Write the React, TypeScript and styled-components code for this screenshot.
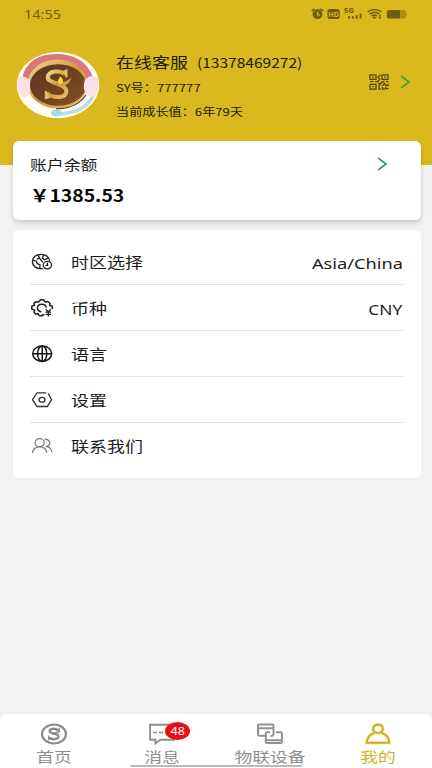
import React from "react";
import styled, { createGlobalStyle } from "styled-components";

const Global = createGlobalStyle`
  * { box-sizing: border-box; }
  body { margin: 0; background: #f2f2f2; font-family: "Noto Sans CJK SC", "Noto Sans", sans-serif; color: #1c1c1c; }
  svg { display: block; flex: none; }
`;

const Screen = styled.div`
  width: 432px;
  height: 768px;
  display: flex;
  flex-direction: column;
  overflow: hidden;
  background: #f2f2f2;
`;

const Text = styled.span<{ $size: number; $sx?: number; $from?: string; $weight?: number; $latin?: boolean }>`
  display: inline-block;
  white-space: nowrap;
  font-size: ${(p) => p.$size}px;
  font-weight: ${(p) => p.$weight ?? 400};
  font-family: ${(p) => (p.$latin ? '"Noto Sans", "Noto Sans CJK SC", sans-serif' : "inherit")};
  transform: scaleX(${(p) => p.$sx ?? 1.25});
  transform-origin: ${(p) => p.$from ?? "left"} center;
`;

const Header = styled.header`
  height: 165px;
  flex: none;
  background: #dbb91e;
`;

const StatusBar = styled.div`
  height: 28px;
  padding: 0 24px;
  display: flex;
  align-items: center;
  justify-content: space-between;
  color: #6f5b0c;
`;

const Profile = styled.div`
  height: 84px;
  margin-top: 15px;
  padding: 0 21px 0 16px;
  display: flex;
  align-items: center;
`;

const ProfileLines = styled.div`
  flex: 1;
  margin-left: 16px;
  padding-top: 1px;
  color: #211b05;
`;

const Line = styled.div<{ $h: number }>`
  height: ${(p) => p.$h}px;
  display: flex;
  align-items: center;
`;

const Phone = styled.div`
  margin-left: 23px;
`;

const ProfileActions = styled.div`
  display: flex;
  align-items: center;
  gap: 11px;
  margin-top: -6px;
`;

const Card = styled.section`
  width: 408px;
  flex: none;
  margin: 0 0 0 12.5px;
  background: #fff;
  border-radius: 6px;
`;

const Balance = styled(Card)`
  height: 79px;
  margin-top: -24px;
  padding: 9px 33px 0 17px;
  position: relative;
  box-shadow: 0 3px 5px rgba(0, 0, 0, 0.17);
`;

const BalanceTitle = styled.div`
  height: 28px;
  display: flex;
  align-items: center;
  justify-content: space-between;
`;

const Amount = styled.div`
  height: 34px;
  display: flex;
  align-items: center;
  color: #080808;
`;

const Menu = styled(Card)`
  height: 248px;
  margin-top: 10px;
  padding: 9px 18px 0 17px;
`;

const MenuRow = styled.div`
  height: 46px;
  display: flex;
  align-items: center;
  border-bottom: 1px solid #e3e3e3;
  &:last-child { border-bottom: 0; }
`;

const MenuLabel = styled.div`
  flex: 1;
  margin-left: 17px;
  padding-bottom: 2px;
`;

const MenuValue = styled.div`
  padding-top: 1px;
`;

const TabBar = styled.nav`
  height: 54px;
  flex: none;
  margin-top: auto;
  display: grid;
  grid-template-columns: repeat(4, 1fr);
  background: #fff;
  border-radius: 8px 8px 0 0;
  position: relative;
`;

const Tab = styled.div<{ $active?: boolean }>`
  display: flex;
  flex-direction: column;
  align-items: center;
  padding-top: 8px;
  color: ${(p) => (p.$active ? "#d0b32c" : "#8e8e8e")};
`;

const IconSlot = styled.div`
  height: 24px;
  display: flex;
  align-items: center;
  position: relative;
`;

const TabLabel = styled.div`
  height: 20px;
  display: flex;
  align-items: center;
`;

const Badge = styled.div`
  position: absolute;
  left: 17px;
  top: 0;
  width: 25px;
  height: 18px;
  border-radius: 50%;
  background: #e60f14;
  color: #fff;
  display: flex;
  align-items: center;
  justify-content: center;
`;

const HomeIndicator = styled.div`
  position: absolute;
  left: 130px;
  bottom: 1px;
  width: 172px;
  height: 2px;
  border-radius: 1px;
  background: #bababa;
`;

const StatusIcons = () => (
  <svg width="98" height="14" viewBox="0 0 98 14">
    <g fill="#6f5b0c">
      <circle cx="7.5" cy="7.2" r="4.9" />
      <path d="M1.6 4 4.6 1.8M13.4 4 10.4 1.8" stroke="#6f5b0c" strokeWidth="1.5" />
      <path d="M7.5 4.8v3H10" stroke="#dbb91e" strokeWidth="1.2" fill="none" />
      <rect x="17.4" y="2" width="12.4" height="10" rx="2.8" />
      <text x="23.6" y="9.7" fontSize="7.2" fontWeight="700" fill="#dbb91e" textAnchor="middle" fontFamily="Noto Sans">HD</text>
      <text x="34" y="6.4" fontSize="6.5" fontWeight="700" textLength="10" lengthAdjust="spacingAndGlyphs" fontFamily="Noto Sans">5G</text>
      <path d="M38 9.2h2v2.3h-2zM41.8 9.2h2v2.3h-2zM45.6 8.2h2v3.3h-2zM49.6 6.6h2v4.9h-2z" />
      <path d="M57.5 5Q64.5-.2 71.5 5M59.5 7.2Q64.5 3.4 69.5 7M61.7 9.2Q64.5 7 67 9" fill="none" stroke="#6f5b0c" strokeWidth="1.5" />
      <path d="m64.3 12-2-1.8q2-1.2 4 0zM70 7.2l1.4 2.2h-2.8zM70 12.2l-1.4-2.2h2.8z" />
      <path d="M79.5 3H90v8.6H79.5Q76.8 11.6 76.8 9V5.6Q76.8 3 79.5 3" />
      <path d="M90 3h4q2 0 2.3 2.4 1.6 1.8 0 3.6-.3 2.6-2.3 2.6h-4z" opacity=".45" />
    </g>
  </svg>
);

const Avatar = () => (
  <svg width="84" height="68" viewBox="0 0 84 68">
    <defs>
      <linearGradient id="gold" x1="0" y1="0" x2="1" y2="1">
        <stop offset="0" stopColor="#f3d896" />
        <stop offset=".5" stopColor="#d39a3b" />
        <stop offset="1" stopColor="#e8bd68" />
      </linearGradient>
      <linearGradient id="brown" x1="0" y1="0" x2="1" y2="1">
        <stop offset="0" stopColor="#5b321f" />
        <stop offset="1" stopColor="#845026" />
      </linearGradient>
      <clipPath id="face"><ellipse cx="42" cy="34" rx="41.5" ry="33.2" /></clipPath>
    </defs>
    <g clipPath="url(#face)">
      <ellipse cx="42" cy="34" rx="41.5" ry="33.2" fill="#fffdf4" />
      <path d="M6 27Q12 3 40 3q28 0 37 23l-8 8Q60 12 42 12T15 34z" fill="#d8787e" />
      <path d="M60 5.500q10 4 15.500 14" fill="none" stroke="#fff" strokeWidth="2.200" strokeDasharray="2 1.500" />
      <path d="M40 63q28 0 37-18" fill="none" stroke="#b9dce8" strokeWidth="3.500" />
    </g>
    <ellipse cx="41.500" cy="33" rx="30" ry="24.500" fill="url(#gold)" />
    <path d="M70 44Q60 58 40 57.800" fill="none" stroke="#443619" strokeWidth="1.200" />
    <ellipse cx="42" cy="34" rx="28" ry="20.800" fill="url(#brown)" />
    <path d="M2 27Q8 23 14 29V42Q10 48 5 45-1 36 2 27M82 27Q75 22 69 29q-3 8 1 14 5 4 9 2 5-9 3-18" fill="#fbe1e6" />
    <ellipse cx="40.500" cy="62" rx="5.500" ry="3.500" fill="#a8d9ec" />
    <path d="M48.500 23Q45 20 39.500 20.500C33 21 30.500 25 32.500 28.500 35 32 47 33 50 38.500 51.500 43 48 46 42 46Q34.500 46 31 42" fill="none" stroke="url(#gold)" strokeWidth="4" />
    <path d="M51.500 18v8.500h-1.800L46.500 20zM28.800 48.500V40h2l3.500 7z" fill="#e6b963" />
    <path d="M42 31.500q7 1 13.500-5-1.500 6.500-8.500 8.500z" fill="#d6a04a" />
    <path d="M44.500 25.500q4 4 2 6.500-3 2.200-5-.8 0-2 3-5.700" fill="#ffd72c" />
  </svg>
);

const QrIcon = () => (
  <svg width="20" height="16" viewBox="0 0 20 16" fill="none" stroke="#55440a" strokeWidth="1.25">
    <path d="M1 .8h6v4.6H1zM13 .8h6v4.6h-6zM1 10.4h6V15H1zM3.2 3.1h1.6M15.2 3.1h1.6M3.2 12.7h1.6M11.500 .8 9 3.200l2.200 2.500M1 7.600h3.400M6 7.600h2.500l2-1.500M12 8h2l1.500-1M17 7.500h2.400M9 9.400h3l-2 2.500v3.200h2M13 12l2.500-2.500 1.500 2h2V9.400M13.500 13v2h2.200l1.500-2M17 14.600h2.400" />
  </svg>
);

const Chevron = ({ color }: { color: string }) => (
  <svg width="11" height="14" viewBox="0 0 11 14" fill="none" stroke={color} strokeWidth="1.6">
    <path d="m1.200 1.200 7.800 5.800-7.800 5.800" />
  </svg>
);

const TimezoneIcon = () => (
  <svg width="24" height="20" viewBox="0 0 24 20" fill="none" stroke="#222" strokeWidth="1.3">
    <path d="M13 16.500C6.500 17.600 2.400 14 2.400 9.600 2.400 5.200 6.300 2.300 11 2.300c4.600 0 8.400 2.800 8.800 7" />
    <path d="M2.800 7.800 6.500 9.500l.6 2 3 1.500-.4 3.600M8.200 2.800l1 3-2.400 1.800M13.800 2.800 12.300 6l2.200 1.800 4.300-2.200M9.300 5.800l3.400 4.500" />
    <ellipse cx="17.400" cy="13.100" rx="4.200" ry="3.700" />
    <path d="M17.400 10.800v2.600h-2" />
  </svg>
);

const CurrencyIcon = () => (
  <svg width="24" height="20" viewBox="0 0 24 20" fill="none" stroke="#222" strokeWidth="1.5" strokeLinejoin="round">
    <path d="M14.500 17.300 12.400 16.800 11.600 18.100 8.800 17.600 8.300 15.800 5.500 16 4 14.300 4.600 12.300 1.700 11V8.300l2.800-1L4 5.200 6.200 3.700 8.600 4 10.400 1.800H13.600l1.600 2.200 2.500-.5L20 5.300l-.5 2 2.800 1V11" />
    <path d="M11.300 13.700C8.900 13.400 7.400 12 7.400 10c0-2.200 1.800-3.800 4.400-3.800 2.500 0 4.300 1.500 4.400 3.500" />
    <path d="m15.700 11.300 2.600 2.700 2.600-2.700M18.300 14v4.500M15.500 14.200h5.600M15.500 16.300h5.600" strokeWidth="1.3" />
  </svg>
);

const LanguageIcon = () => (
  <svg width="24" height="20" viewBox="0 0 24 20" fill="none" stroke="#151515" strokeWidth="1.5">
    <ellipse cx="12.200" cy="9.700" rx="9.500" ry="7.700" />
    <ellipse cx="12.200" cy="9.700" rx="4.600" ry="7.700" />
    <path d="M12.200 2v15.400M2.700 9.700h19" />
  </svg>
);

const SettingsIcon = () => (
  <svg width="24" height="20" viewBox="0 0 24 20" fill="none" stroke="#333" strokeWidth="1.35">
    <path d="M18.300 3.600 21.600 9.700 17.300 16.500H7L2.500 9.700 7 2.800h9.200" />
    <ellipse cx="12" cy="9.700" rx="3" ry="2.400" />
  </svg>
);

const ContactIcon = () => (
  <svg width="24" height="20" viewBox="0 0 24 20" fill="none" stroke="#777" strokeWidth="1.200">
    <ellipse cx="9.600" cy="6.700" rx="4.600" ry="4" />
    <path d="M2.400 17q.6-6.200 7.200-6.200t7.200 6.200M14.500 3.200q5 .1 5.200 3.900-.1 2.600-2.800 3.500 4.500.9 5 5.400" />
  </svg>
);

const HomeIcon = () => (
  <svg width="28" height="22" viewBox="0 0 28 22" fill="none" stroke="#8b8b8b">
    <ellipse cx="14" cy="11" rx="12" ry="9.500" strokeWidth="2.200" />
    <path d="M18.400 7.600Q16.500 5.600 13.500 5.700 9.600 6 9.600 8.200q.2 1.700 4.500 2.500 4.600.8 4.400 3-.3 2.400-4.500 2.500-3.600 0-5-2" strokeWidth="2.400" />
    <path d="M19.200 4.800v4M8.600 12.800v4.400" strokeWidth="1.200" />
    <path d="M14 9.600q4 .4 6-1.600" strokeWidth="1.300" />
  </svg>
);

const MessageIcon = () => (
  <svg width="28" height="22" viewBox="0 0 28 22" fill="none" stroke="#8e8e8e" strokeWidth="1.900">
    <path d="M26 1.800H2.100v15H7.500v3.600l5-3.600H26z" />
    <path d="M5 9.400h4M11 9.400h4M17 9.400h4" strokeWidth="1.500" />
  </svg>
);

const DevicesIcon = () => (
  <svg width="28" height="22" viewBox="0 0 28 22" fill="none" stroke="#929292" strokeWidth="2">
    <path d="M9 12.800H3.300q-1.300 0-1.300-1.200V2.800q0-1.200 1.300-1.200h12.800q1.400 0 1.400 1.200v9q0 1.200-3.200 1.100M2 5.200h15.400M14 9.200h-3q-1.200 0-1.200.9v9q0 1 1.400 1h13.400q1.300 0 1.300-1V10.200q0-1-1.300-1H20M9.800 17.200h16" />
  </svg>
);

const MineIcon = () => (
  <svg width="28" height="22" viewBox="0 0 28 22">
    <g fill="none" stroke="#fff39a" strokeWidth="4.500" opacity=".55">
      <ellipse cx="14" cy="5.800" rx="4.900" ry="4.200" />
      <path d="M2.700 19.800q.7-8 8-9.400h6.600q7.300 1.400 8 9.400z" />
    </g>
    <g fill="none" stroke="#cca82e" strokeWidth="2.100">
      <ellipse cx="14" cy="5.800" rx="4.900" ry="4.200" />
      <path d="M10.500 9.900q-7.100 2-7.800 9.800h22.600q-.7-7.800-7.800-9.800" />
    </g>
  </svg>
);

const menu = [
  { label: "时区选择", value: "Asia/China", stretch: 1.265, Icon: TimezoneIcon },
  { label: "币种", value: "CNY", stretch: 1.2, Icon: CurrencyIcon },
  { label: "语言", Icon: LanguageIcon },
  { label: "设置", Icon: SettingsIcon },
  { label: "联系我们", Icon: ContactIcon },
];

const tabs = [
  { label: "首页", Icon: HomeIcon },
  { label: "消息", Icon: MessageIcon, badge: "48" },
  { label: "物联设备", Icon: DevicesIcon },
  { label: "我的", Icon: MineIcon, active: true },
];

export default function App() {
  return (
    <Screen>
      <Global />
      <Header>
        <StatusBar>
          <Text $size={12.4} $sx={1.17} $latin>14:55</Text>
          <StatusIcons />
        </StatusBar>
        <Profile>
          <Avatar />
          <ProfileLines>
            <Line $h={25}>
              <Text $size={14.4}>在线客服</Text>
              <Phone><Text $size={13.5} $sx={1.15}>(13378469272)</Text></Phone>
            </Line>
            <Line $h={26}><Text $size={11} $sx={1.195}>SY号：777777</Text></Line>
            <Line $h={23}><Text $size={11} $sx={1.195}>当前成长值：6年79天</Text></Line>
          </ProfileLines>
          <ProfileActions>
            <QrIcon />
            <Chevron color="#36a035" />
          </ProfileActions>
        </Profile>
      </Header>
      <Balance>
        <BalanceTitle>
          <Text $size={13.5}>账户余额</Text>
          <Chevron color="#218d7b" />
        </BalanceTitle>
        <Amount><Text $size={16.8} $sx={1.155} $weight={700}>￥1385.53</Text></Amount>
      </Balance>
      <Menu>
        {menu.map(({ label, value, stretch, Icon }) => (
          <MenuRow key={label}>
            <Icon />
            <MenuLabel><Text $size={14.4}>{label}</Text></MenuLabel>
            {value && (
              <MenuValue><Text $size={14.4} $sx={stretch} $from="right" $latin>{value}</Text></MenuValue>
            )}
          </MenuRow>
        ))}
      </Menu>
      <TabBar>
        {tabs.map(({ label, Icon, badge, active }) => (
          <Tab key={label} $active={active}>
            <IconSlot>
              <Icon />
              {badge && <Badge><Text $size={10} $sx={1.25} $from="center" $latin>{badge}</Text></Badge>}
            </IconSlot>
            <TabLabel><Text $size={14} $sx={1.27} $from="center">{label}</Text></TabLabel>
          </Tab>
        ))}
        <HomeIndicator />
      </TabBar>
    </Screen>
  );
}
